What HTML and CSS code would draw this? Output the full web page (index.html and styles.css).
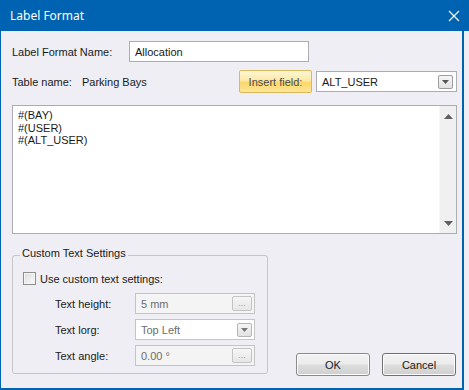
FILE: index.html
```html
<!DOCTYPE html>
<html>
<head>
<meta charset="utf-8">
<link rel="stylesheet" href="styles.css">
</head>
<body>
<div class="window">
  <div class="titlebar">
    <span class="title">Label Format</span>
    <svg class="close" width="12" height="12" viewBox="0 0 12 12"><path d="M1 1L11 11M11 1L1 11" stroke="#fff" stroke-width="1.1" fill="none"/></svg>
  </div>
  <div class="body">
    <div class="row row-name">
      <span class="lbl lbl-name">Label Format Name:</span>
      <div class="field name-field">Allocation</div>
    </div>
    <div class="row row-table">
      <span class="lbl lbl-table">Table name:</span>
      <span class="lbl">Parking Bays</span>
      <button class="insert">Insert field:</button>
      <div class="field combo field-combo">
        <span>ALT_USER</span>
        <span class="drop"><svg width="7" height="4" viewBox="0 0 7 4"><path d="M0 0H7L3.5 4Z" fill="#555"/></svg></span>
      </div>
    </div>
    <div class="editor">
      <div class="lines">
        <div>#(BAY)</div>
        <div>#(USER)</div>
        <div>#(ALT_USER)</div>
      </div>
      <div class="vscroll">
        <svg width="9" height="5" viewBox="0 0 9 5"><path d="M0 5H9L4.5 0Z" fill="#606060"/></svg>
        <svg width="9" height="5" viewBox="0 0 9 5"><path d="M0 0H9L4.5 5Z" fill="#606060"/></svg>
      </div>
    </div>
    <div class="bottom">
      <div class="group">
        <span class="legend">Custom Text Settings</span>
        <div class="check-row">
          <span class="checkbox"></span>
          <span class="lbl">Use custom text settings:</span>
        </div>
        <div class="prop">
          <span class="lbl prop-lbl">Text height:</span>
          <div class="field small disabled"><span>5 mm</span><span class="dots">...</span></div>
        </div>
        <div class="prop">
          <span class="lbl prop-lbl">Text lorg:</span>
          <div class="field small combo-dis"><span>Top Left</span><span class="drop"><svg width="7" height="4" viewBox="0 0 7 4"><path d="M0 0H7L3.5 4Z" fill="#777"/></svg></span></div>
        </div>
        <div class="prop">
          <span class="lbl prop-lbl">Text angle:</span>
          <div class="field small disabled"><span>0.00 °</span><span class="dots">...</span></div>
        </div>
      </div>
      <div class="buttons">
        <button class="btn btn-default">OK</button>
        <button class="btn">Cancel</button>
      </div>
    </div>
  </div>
</div>
</body>
</html>
```
FILE: styles.css
```css
* { box-sizing: border-box; }
html, body { margin: 0; padding: 0; }
body {
  width: 469px;
  height: 390px;
  overflow: hidden;
  background: #eeeef4;
  font-family: "Liberation Sans", Arial, sans-serif;
  font-size: 11px;
  color: #1a1a1a;
}
.window {
  width: 469px;
  height: 390px;
  display: flex;
  flex-direction: column;
  background: #eeeef4;
}
.titlebar {
  height: 31px;
  flex: none;
  background: #0063b1;
  display: flex;
  align-items: center;
  padding: 0 9px 0 10px;
}
.title {
  color: #fff;
  font-family: "Noto Sans", "Liberation Sans", sans-serif;
  font-size: 12px;
  flex: 1;
}
.body {
  flex: 1;
  border-left: 1px solid #0063b1;
  border-right: 2px solid #0063b1;
  border-bottom: 2px solid #0063b1;
  margin-right: 5px;
  padding: 10px 5px 0 11px;
  display: flex;
  flex-direction: column;
}
.row { display: flex; align-items: center; }
.row-name { height: 21px; }
.lbl-name { width: 117px; }
.field {
  height: 21px;
  background: #fff;
  border: 1px solid #abadb3;
  display: flex;
  align-items: center;
  padding-left: 5px;
}
.name-field { width: 180px; }
.row-table { height: 23px; margin-top: 8px; }
.lbl-table { width: 70px; }
.insert {
  margin-left: auto;
  width: 73px;
  height: 23px;
  font-family: inherit;
  font-size: 11px;
  color: #4a4a4a;
  border: 1px solid #d9b95c;
  border-radius: 2px;
  background: linear-gradient(#fff6d4 0%, #fde9a6 45%, #fcd76a 55%, #fde69a 100%);
  padding: 0;
}
.field-combo {
  width: 141px;
  margin-left: 4px;
  justify-content: space-between;
  padding-right: 3px;
}
.drop {
  width: 15px;
  height: 14px;
  border: 1px solid #9d9d9d;
  border-radius: 2px;
  background: linear-gradient(#f6f6f6, #e2e2e2);
  display: flex;
  align-items: center;
  justify-content: center;
}
.editor {
  margin-top: 12px;
  height: 129px;
  border: 1px solid #abadb3;
  background: #fff;
  display: flex;
}
.lines {
  flex: 1;
  padding: 3px 5px;
  line-height: 12.5px;
}
.vscroll {
  width: 17px;
  background: #f0f0f0;
  border-left: 1px solid #f7f7f7;
  display: flex;
  flex-direction: column;
  align-items: center;
  justify-content: space-between;
  padding: 8px 0 7px;
}
.bottom {
  display: flex;
  align-items: flex-end;
  margin-top: 21px;
}
.group {
  width: 256px;
  height: 119px;
  border: 1px solid #c6c6c6;
  border-radius: 3px;
  padding: 0 0 0 10px;
  display: flex;
  flex-direction: column;
  margin-bottom: 2px;
}
.legend {
  align-self: flex-start;
  margin: -9px 0 0 -3px;
  padding: 0 2px;
  background: #eeeef4;
  line-height: 13px;
}
.check-row {
  display: flex;
  align-items: center;
  margin-top: 12px;
  height: 13px;
}
.checkbox {
  width: 13px;
  height: 13px;
  border: 1px solid #8e8f8f;
  background: linear-gradient(135deg, #dcdcdc, #fbfbfb);
  box-shadow: inset 0 0 0 1px #f4f4f4;
  margin-right: 4px;
}
.prop {
  display: flex;
  align-items: center;
  height: 21px;
  margin-top: 5px;
}
.check-row + .prop { margin-top: 8px; }
.prop-lbl { width: 80px; padding-left: 32px; box-sizing: content-box; }
.small {
  width: 120px;
  justify-content: space-between;
  padding-right: 2px;
  color: #6d6d6d;
  border-color: #c4c4c4;
}
.disabled { background: #f4f4f4; }
.combo-dis { background: #fff; padding-right: 2px; }
.combo-dis .drop { border-color: #b5b5b5; }
.dots {
  width: 20px;
  height: 15px;
  border: 1px solid #c4c4c4;
  border-radius: 2px;
  background: linear-gradient(#f6f6f6, #e6e6e6);
  color: #999;
  font-size: 9px;
  line-height: 13px;
  text-align: center;
}
.buttons {
  margin-left: auto;
  display: flex;
  gap: 12px;
  margin-right: 1px;
}
.btn {
  width: 74px;
  height: 23px;
  font-family: inherit;
  font-size: 11px;
  color: #1a1a1a;
  border: 1px solid #707070;
  border-radius: 3px;
  background: linear-gradient(#f2f2f2 0%, #ebebeb 48%, #dddddd 52%, #cfcfcf 100%);
  box-shadow: inset 0 0 0 1px #fcfcfc;
  padding: 0;
}
.btn-default { border-color: #8a8a8a; }
```
